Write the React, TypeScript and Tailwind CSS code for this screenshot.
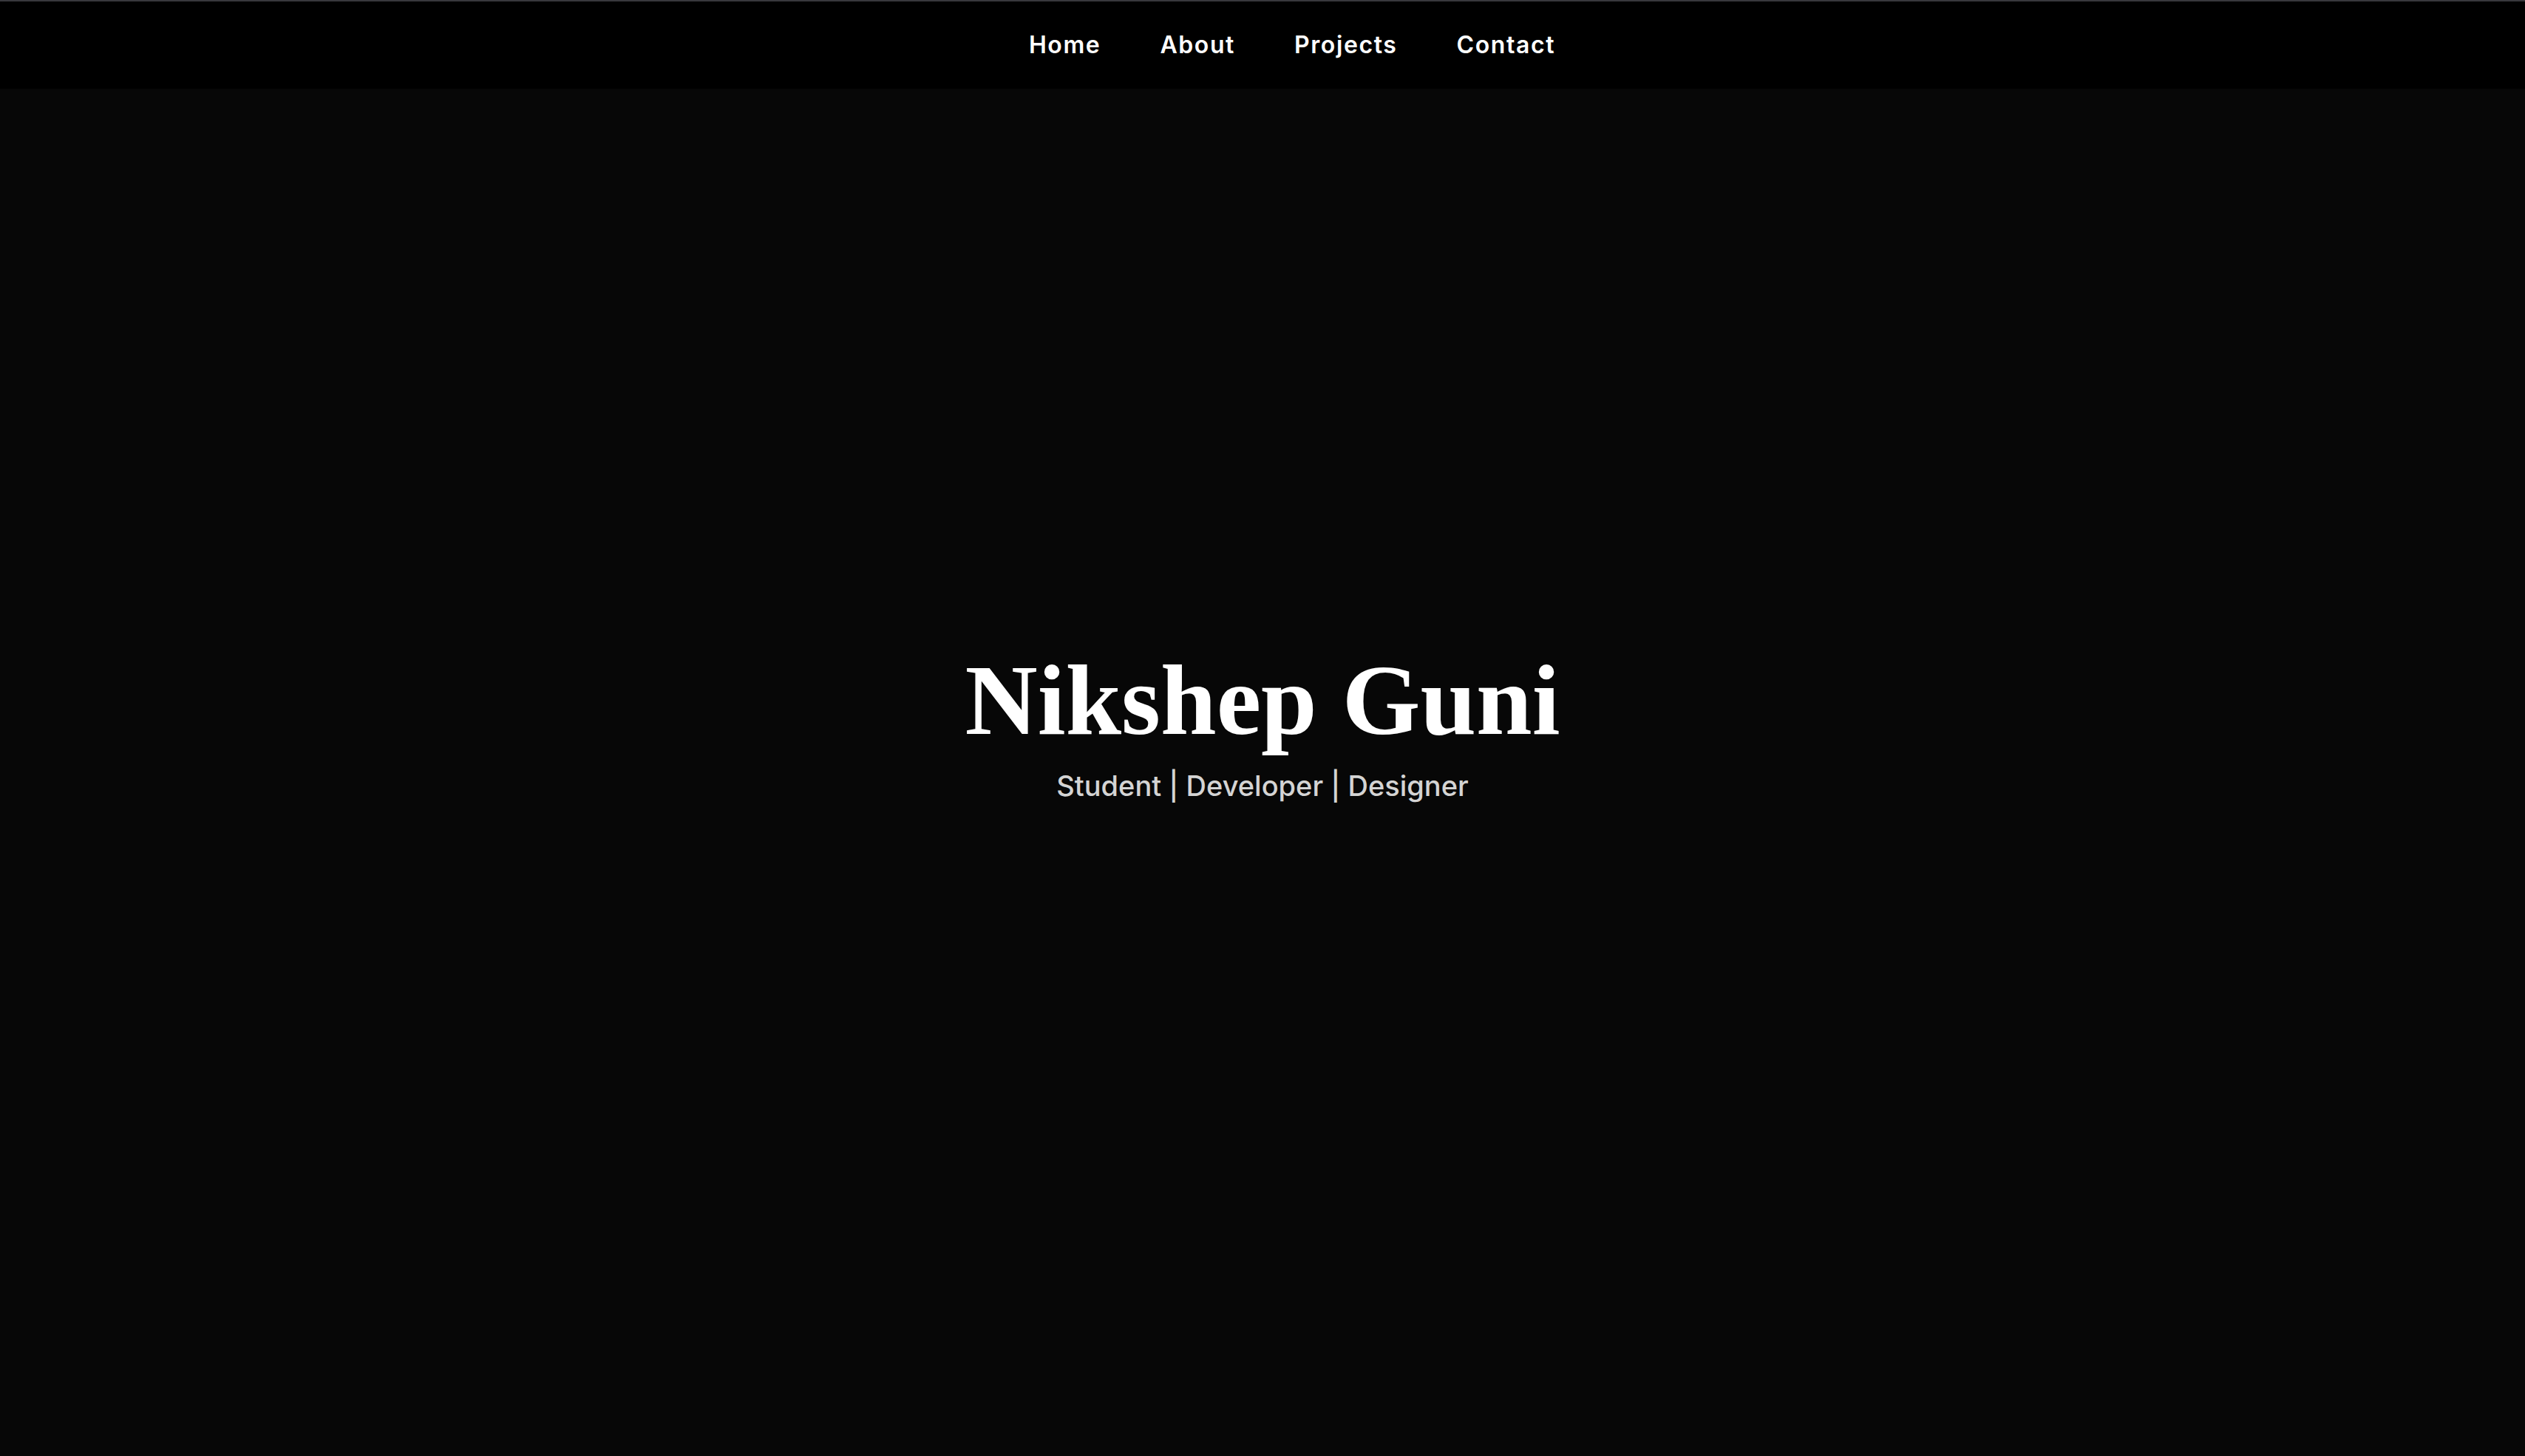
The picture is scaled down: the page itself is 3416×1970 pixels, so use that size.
export default function App() {
  const links = ["Home", "About", "Projects", "Contact"];

  return (
    <div className="min-h-screen bg-[#070707] text-white" style={{ fontFamily: "Inter, 'Noto Sans', sans-serif" }}>
      <nav className="fixed inset-x-0 top-0 z-10 flex h-[120px] items-center justify-center gap-20 border-t-2 border-[#38383d] bg-black pl-[80px]">
        {links.map(l => (
          <a key={l} href={`#${l.toLowerCase()}`} className="text-[32px] font-semibold tracking-wider text-white">
            {l}
          </a>
        ))}
      </nav>

      <section id="home" className="flex h-screen flex-col items-center justify-center text-center">
        <h1 className="text-[136px] font-bold leading-none text-white" style={{ fontFamily: "'Liberation Serif', 'DejaVu Serif', serif" }}>
          Nikshep Guni
        </h1>
        <p className="mt-5 text-[38px] font-medium leading-normal text-neutral-300">
          Student | Developer | Designer
        </p>
      </section>
    </div>
  );
}
